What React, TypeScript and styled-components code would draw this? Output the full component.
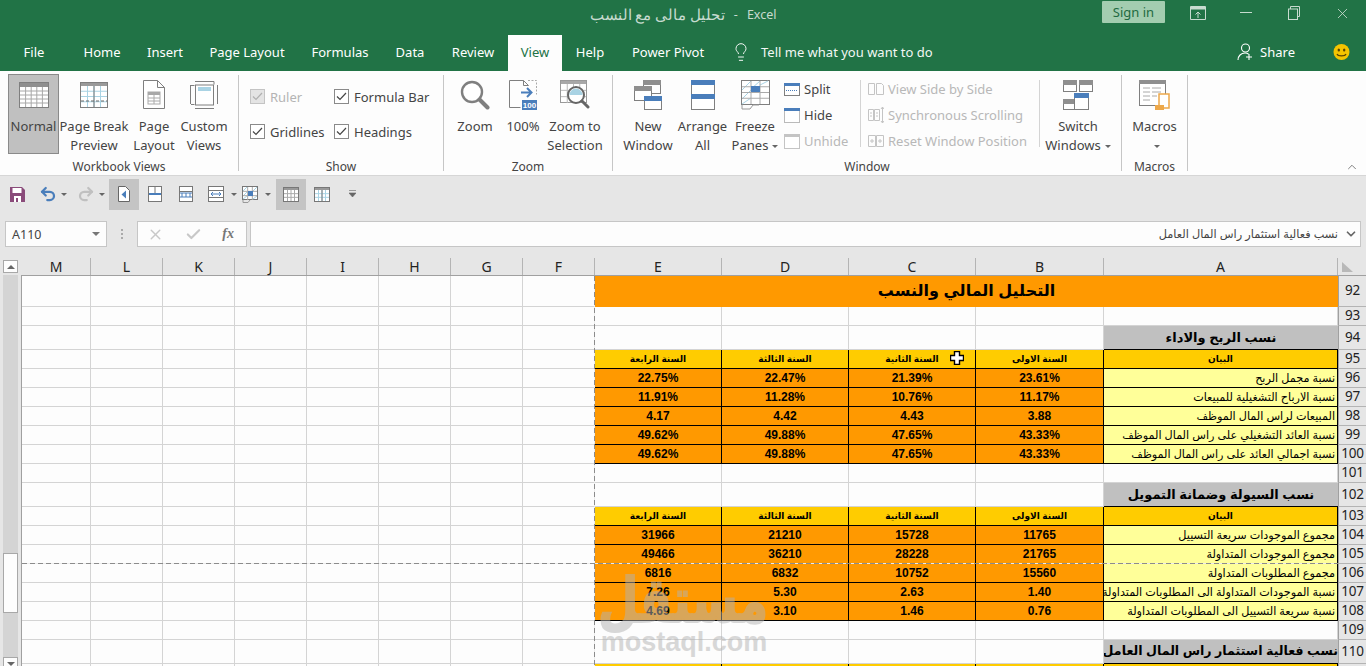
import React from 'react'
import styled, { createGlobalStyle } from 'styled-components'
import { Lightbulb, Undo2, Redo2, X, Check, ChevronDown, ChevronUp } from 'lucide-react'

const UI_FONT = `"Noto Sans", "Open Sans", sans-serif`
const SHEET_FONT = `"Liberation Sans", "DejaVu Sans", sans-serif`
const GREEN = '#217346'
const LINE = '#7f7f7f'
const BLUE = '#4a7ebb'
const OFF = '#c4c4c4'

const GlobalStyle = createGlobalStyle`
  html, body { margin: 0; padding: 0; height: 666px; overflow: hidden; background: #e6e6e6; }
  * { box-sizing: border-box; }
  body { font-family: ${UI_FONT}; }
`

const Window = styled.div`
  width: 1366px;
  height: 666px;
  overflow: hidden;
  display: flex;
  flex-direction: column;
  background: #e6e6e6;
`

const TitleBar = styled.div`
  height: 35px;
  flex: none;
  background: ${GREEN};
  display: grid;
  grid-template-columns: 1fr auto 1fr;
  color: #c7dbcf;
`

const TitleText = styled.div`
  display: flex;
  gap: 9px;
  font-size: 12.5px;
  line-height: 29px;
  white-space: nowrap;
`

const TitleName = styled.span`
  font-size: 14.5px;
  direction: rtl;
`

const TitleRight = styled.div`
  display: flex;
  justify-content: flex-end;
  align-items: flex-start;
`

const SignIn = styled.div`
  width: 63px;
  height: 22px;
  margin: 1px 9px 0 0;
  background: #a3cdb0;
  border-radius: 1px;
  color: #1e6a41;
  font-size: 13px;
  line-height: 22px;
  text-align: center;
`

const WinButton = styled.div`
  width: 48px;
  height: 26px;
  display: flex;
  align-items: center;
  justify-content: center;
`

const TabBar = styled.div`
  height: 36px;
  flex: none;
  background: ${GREEN};
  display: flex;
  padding-left: 11px;
  color: #fff;
  font-size: 13px;
`

const Tab = styled.div<{ $w: number; $active?: boolean; $gap?: number }>`
  width: ${(p) => p.$w}px;
  flex: none;
  margin-left: ${(p) => p.$gap || 0}px;
  line-height: 34px;
  text-align: center;
  white-space: nowrap;
  background: ${(p) => (p.$active ? '#fdfdfd' : 'transparent')};
  color: ${(p) => (p.$active ? GREEN : '#fff')};
`

const TellMe = styled.div`
  display: flex;
  align-items: center;
  height: 34px;
  margin-left: 13px;
  gap: 10px;
  color: #f2f7f4;
`

const TabRight = styled.div`
  margin-left: auto;
  display: flex;
  align-items: center;
  height: 34px;
  padding-right: 16px;
`

const ShareLabel = styled.span`
  margin: 0 38px 0 7px;
`

const Ribbon = styled.div`
  height: 105px;
  flex: none;
  background: #fdfdfd;
  border-bottom: 1px solid #d6d6d6;
  padding-top: 4px;
  display: flex;
  align-items: flex-start;
  position: relative;
`

const RibbonGroup = styled.div<{ $w: number }>`
  width: ${(p) => p.$w}px;
  height: 96px;
  flex: none;
  border-right: 1px solid #c6c6c6;
  display: flex;
  flex-direction: column;
`

const GroupBody = styled.div<{ $pl?: number }>`
  display: flex;
  flex: none;
  height: 80px;
  margin-top: -1px;
  padding-left: ${(p) => p.$pl || 0}px;
`

const GroupLabel = styled.div`
  flex: none;
  margin-top: 4px;
  font-size: 12px;
  line-height: 18px;
  text-align: center;
  color: #444;
  white-space: nowrap;
`

const LargeButton = styled.div<{ $w: number; $active?: boolean }>`
  width: ${(p) => p.$w}px;
  height: 80px;
  flex: none;
  padding-top: 5px;
  border: 1px solid ${(p) => (p.$active ? '#8a8a8a' : 'transparent')};
  background: ${(p) => (p.$active ? '#c0c0c0' : 'transparent')};
  display: flex;
  flex-direction: column;
  align-items: center;
`

const IconSlot = styled.div`
  height: 29px;
  flex: none;
  display: flex;
  align-items: center;
  justify-content: center;
`

const ButtonLabel = styled.div`
  flex: none;
  margin-top: 8px;
  font-size: 13px;
  line-height: 19px;
  color: #444;
  text-align: center;
  white-space: nowrap;
`

const Caret = styled.span`
  display: inline-block;
  width: 0;
  height: 0;
  margin-left: 4px;
  vertical-align: middle;
  border-left: 3px solid transparent;
  border-right: 3px solid transparent;
  border-top: 3px solid #666;
`

const CheckGrid = styled.div`
  display: grid;
  grid-template-columns: 84px auto;
  grid-auto-rows: 35px;
  padding: 5px 0 0 11px;
`

const CheckItem = styled.div<{ $off?: boolean }>`
  display: flex;
  align-items: center;
  gap: 5px;
  height: 35px;
  font-size: 13px;
  color: ${(p) => (p.$off ? '#b4b4b4' : '#444')};
  white-space: nowrap;
`

const CheckBoxMark = styled.span<{ $off?: boolean }>`
  width: 15px;
  height: 15px;
  flex: none;
  display: flex;
  align-items: center;
  justify-content: center;
  background: ${(p) => (p.$off ? '#e4e4e4' : '#fff')};
  border: 1px solid ${(p) => (p.$off ? '#c4c4c4' : '#8a8a8a')};
`

const SmallColumn = styled.div<{ $w: number; $ml: number }>`
  width: ${(p) => p.$w}px;
  flex: none;
  margin: 2px 0 0 ${(p) => p.$ml}px;
`

const SmallDivider = styled.div`
  width: 1px;
  height: 67px;
  flex: none;
  margin-top: 6px;
  background: #d4d4d4;
`

const SmallItem = styled.div<{ $off?: boolean }>`
  height: 26px;
  display: flex;
  align-items: center;
  gap: 4px;
  font-size: 13px;
  white-space: nowrap;
  color: ${(p) => (p.$off ? '#b8b8b8' : '#444')};
`

const CollapseButton = styled.div`
  position: absolute;
  right: 7px;
  bottom: 1px;
  color: #666;
  line-height: 0;
`

const QatBar = styled.div`
  height: 36px;
  flex: none;
  display: flex;
  align-items: center;
  padding-left: 2px;
`

const QatButton = styled.div<{ $w: number; $ml?: number; $active?: boolean; $color?: string }>`
  width: ${(p) => p.$w}px;
  height: 31px;
  margin-left: ${(p) => p.$ml || 0}px;
  flex: none;
  display: flex;
  align-items: center;
  justify-content: center;
  color: ${(p) => p.$color || '#666'};
  background: ${(p) => (p.$active ? '#c4c4c4' : 'transparent')};
`

const FormulaRow = styled.div`
  height: 46px;
  flex: none;
  padding: 9px 5px 11px;
  display: flex;
`

const NameBox = styled.div`
  width: 102px;
  background: #fdfdfd;
  border: 1px solid #c6c6c6;
  padding: 0 6px;
  display: flex;
  align-items: center;
  justify-content: space-between;
  font-size: 12.5px;
  color: #444;
`

const BoxCaret = styled.span`
  width: 0;
  height: 0;
  border-left: 4px solid transparent;
  border-right: 4px solid transparent;
  border-top: 4px solid #777;
`

const Dots = styled.div`
  width: 30px;
  display: flex;
  flex-direction: column;
  align-items: center;
  justify-content: center;
  gap: 2px;
  & > i {
    width: 2px;
    height: 2px;
    background: #aaa;
  }
`

const FxBox = styled.div`
  width: 110px;
  background: #fdfdfd;
  border: 1px solid #c6c6c6;
  display: flex;
  align-items: center;
  justify-content: space-between;
  padding: 0 12px 0 9px;
`

const FxText = styled.span`
  font-family: "Liberation Serif", serif;
  font-style: italic;
  font-weight: bold;
  font-size: 14px;
  color: #777;
`

const FormulaInput = styled.div`
  width: 1111px;
  margin-left: 3px;
  background: #fdfdfd;
  border: 1px solid #c6c6c6;
  display: flex;
  align-items: center;
  gap: 6px;
  padding: 0 2px 0 8px;
  direction: rtl;
`

const FormulaText = styled.span`
  font-family: ${SHEET_FONT};
  font-size: 11.3px;
  color: #444;
`

const SheetArea = styled.div`
  flex: 1;
  min-height: 0;
  display: flex;
  position: relative;
`

const ScrollBar = styled.div`
  width: 22px;
  flex: none;
  height: 420px;
  background: linear-gradient(#e6e6e6 17px, transparent 17px),
    linear-gradient(90deg, #e6e6e6 3px, #d4d4d4 3px, #d4d4d4 18px, #e6e6e6 18px, #e6e6e6 21px, #a0a0a0 21px);
  padding: 2px 0 0 3px;
`

const ScrollButton = styled.div`
  width: 15px;
  height: 13px;
  background: #fdfdfd;
  border: 1px solid #a8a8a8;
  display: flex;
  align-items: center;
  justify-content: center;
`

const ScrollThumb = styled.div`
  width: 15px;
  height: 60px;
  margin: 280px 0 44px;
  background: #fdfdfd;
  border: 1px solid #a8a8a8;
`

const ArrowUp = styled.span`
  border-left: 4px solid transparent;
  border-right: 4px solid transparent;
  border-bottom: 4px solid #666;
`

const ArrowDown = styled.span`
  border-left: 4px solid transparent;
  border-right: 4px solid transparent;
  border-top: 4px solid #666;
`

const Sheet = styled.div`
  width: 1344px;
  flex: none;
  position: relative;
  overflow: hidden;
`

const COLUMNS = '69px repeat(7, 72px) 127px 127px 127px 128px 234px 28px'

const HeaderRow = styled.div`
  display: grid;
  grid-template-columns: ${COLUMNS};
  height: 18px;
  border-bottom: 1px solid #a0a0a0;
`

const ColHead = styled.div`
  border-right: 1px solid #b4b4b4;
  font-size: 14px;
  line-height: 17px;
  text-align: center;
  color: #222;
`

const Corner = styled.div`
  padding: 4px 0 0 4px;
  line-height: 0;
`

const Row = styled.div<{ $h: number }>`
  display: grid;
  grid-template-columns: ${COLUMNS};
  height: ${(p) => p.$h}px;
  font-family: ${SHEET_FONT};
`

const Cell = styled.div`
  border-right: 1px solid #d4d4d4;
  border-bottom: 1px solid #d4d4d4;
  background: #fdfdfd;
`

const TitleCell = styled.div`
  grid-column: span 5;
  background: #ff9900;
  direction: rtl;
  text-align: center;
  font-size: 16px;
  font-weight: bold;
  line-height: 30px;
  color: #000;
`

const SectionCell = styled.div<{ $size: number }>`
  background: #c0c0c0;
  border-bottom: 1px solid #000;
  direction: rtl;
  text-align: center;
  font-size: ${(p) => p.$size}px;
  font-weight: bold;
  line-height: 23px;
  color: #000;
  white-space: nowrap;
  overflow: hidden;
`

const TableCell = styled.div<{ $bg: string; $size?: number; $weight?: string }>`
  background: ${(p) => p.$bg};
  border-right: 1px solid #000;
  border-bottom: 1px solid #000;
  font-size: ${(p) => p.$size || 12}px;
  font-weight: ${(p) => p.$weight || 'bold'};
  line-height: 18px;
  text-align: center;
  color: #000;
  white-space: nowrap;
  overflow: hidden;
  direction: rtl;
`

const LabelCell = styled(TableCell)`
  text-align: right;
  padding-right: 2px;
`

const RowHead = styled.div`
  background: #e6e6e6;
  border-left: 1px solid #a0a0a0;
  border-bottom: 1px solid #b4b4b4;
  font-family: ${UI_FONT};
  font-size: 13.5px;
  line-height: 1;
  color: #222;
  display: flex;
  align-items: center;
  justify-content: center;
  letter-spacing: -0.3px;
`

const PageBreakV = styled.div`
  position: absolute;
  left: 572px;
  top: 18px;
  bottom: 0;
  width: 1px;
  background: repeating-linear-gradient(180deg, #8c8c8c 0 5px, #ececec 5px 8px);
`

const PageBreakH = styled.div`
  position: absolute;
  left: 0;
  width: 1316px;
  top: 305px;
  height: 1px;
  background: repeating-linear-gradient(90deg, #8c8c8c 0 5px, #ececec 5px 8px);
`

const CellCursor = styled.svg`
  position: absolute;
  left: 928px;
  top: 93px;
`

const Watermark = styled.div`
  position: absolute;
  left: 578px;
  top: 308px;
  width: 168px;
  text-align: center;
  color: #b3b3b3;
  opacity: 0.5;
  font-family: ${SHEET_FONT};
  font-weight: bold;
  pointer-events: none;
`

const WatermarkWord = styled.div`
  font-size: 62px;
  line-height: 62px;
  direction: rtl;
  white-space: nowrap;
  -webkit-text-stroke: 2px #b3b3b3;
  transform: translateY(4px) scaleX(0.75);
  transform-origin: right center;
`

const WatermarkSite = styled.div`
  font-size: 27px;
  line-height: 28px;
`

/* ---------- drawings ---------- */

const GridLines = ({ x, y, w, h, cols, rows, color }: { x: number; y: number; w: number; h: number; cols: number; rows: number; color: string }) => (
  <g stroke={color} strokeWidth="1">
    {Array.from({ length: cols - 1 }, (_, i) => (
      <line key={`c${i}`} x1={x + ((i + 1) * w) / cols} x2={x + ((i + 1) * w) / cols} y1={y} y2={y + h} />
    ))}
    {Array.from({ length: rows - 1 }, (_, i) => (
      <line key={`r${i}`} x1={x} x2={x + w} y1={y + ((i + 1) * h) / rows} y2={y + ((i + 1) * h) / rows} />
    ))}
  </g>
)

const NormalIcon = () => (
  <svg width="30" height="26" viewBox="0 0 30 26">
    <rect x="0.5" y="0.5" width="29" height="25" fill="#fff" stroke={LINE} />
    <rect x="1" y="1" width="28" height="4" fill="#8f8f8f" />
    <GridLines x={1} y={5} w={28} h={20} cols={5} rows={5} color="#a8a8a8" />
  </svg>
)

const PageBreakIcon = () => (
  <svg width="28" height="26" viewBox="0 0 28 26">
    <rect x="0.5" y="0.5" width="27" height="25" fill="#fff" stroke={LINE} />
    <rect x="1" y="1" width="26" height="3" fill="#9a9a9a" />
    <GridLines x={1} y={4} w={26} h={21} cols={4} rows={4} color="#a9d3e4" />
    <line x1="14" x2="14" y1="4" y2="25" stroke="#777" />
    <line x1="1" x2="27" y1="19" y2="19" stroke="#666" strokeDasharray="3 2" />
  </svg>
)

const PageLayoutIcon = () => (
  <svg width="22" height="29" viewBox="0 0 22 29">
    <path d="M.5.5h14l7 7v21H.5z M14.5.5v7h7" fill="#fff" stroke={LINE} />
    <rect x="5" y="12" width="12" height="12" fill="#fff" stroke="#aaa" />
    <rect x="5" y="12" width="12" height="3" fill="#a8a8a8" />
    <GridLines x={5} y={15} w={12} h={9} cols={2} rows={3} color="#aaa" />
  </svg>
)

const CustomViewsIcon = () => (
  <svg width="28" height="29" viewBox="0 0 28 29">
    <path d="M4.500 5.500H1M.5 5v19M1 24.500h3.500M5 1.500h19v3M27.500 5v19M24 28.500H5" fill="none" stroke={LINE} />
    <rect x="5.500" y="5" width="18" height="20" fill="#fff" stroke={LINE} />
    <rect x="8" y="7" width="13" height="4" fill="#a9d3e4" />
  </svg>
)

const ZoomIcon = () => (
  <svg width="30" height="30" viewBox="0 0 30 30">
    <circle cx="12" cy="12" r="10" fill="#fff" stroke={LINE} strokeWidth="2.4" />
    <line x1="19.5" y1="19.5" x2="27.5" y2="27.5" stroke={LINE} strokeWidth="4" strokeLinecap="round" />
  </svg>
)

const HundredIcon = () => (
  <svg width="28" height="30" viewBox="0 0 28 30">
    <path d="M.5 27.500V.5h14l5 5" fill="none" stroke={LINE} />
    <path d="M.5 27.500h11M14.500.5v5h5" fill="none" stroke={LINE} />
    <path d="M19 .5h8.500v14" fill="none" stroke="#aaa" strokeDasharray="2 1.500" />
    <path d="M12 12.500h10M18 8l4.500 4.500L18 17" fill="none" stroke={BLUE} strokeWidth="2" />
    <rect x="13" y="20" width="15" height="10" fill={BLUE} />
    <text x="20.5" y="28" textAnchor="middle" fontSize="8" fontWeight="bold" fontFamily={SHEET_FONT} fill="#fff">100</text>
  </svg>
)

const ZoomSelectionIcon = () => (
  <svg width="30" height="30" viewBox="0 0 30 30">
    <rect x="0.5" y="0.5" width="26" height="22" fill="#fff" stroke="#999" />
    <rect x="1" y="1" width="25" height="3" fill="#a8a8a8" />
    <GridLines x={1} y={4} w={25} h={19} cols={4} rows={3} color="#bbb" />
    <circle cx="16" cy="15" r="8" fill="#fff" stroke="#666" strokeWidth="2" />
    <path d="M9.500 15a6.500 6.500 0 0 1 13 0z" fill="#a9d3e4" />
    <line x1="22" y1="21" x2="28" y2="27" stroke="#666" strokeWidth="3" strokeLinecap="round" />
  </svg>
)

const MiniWindow = ({ x, y, w, h, bar }: { x: number; y: number; w: number; h: number; bar: string }) => (
  <g>
    <rect x={x + 0.5} y={y + 0.5} width={w} height={h} fill="#fff" stroke={LINE} />
    <rect x={x} y={y} width={w + 1} height="5" fill={bar} />
  </g>
)

const NewWindowIcon = () => (
  <svg width="28" height="30" viewBox="0 0 28 30">
    <MiniWindow x={9} y={0} w={17} h={13} bar="#8f8f8f" />
    <MiniWindow x={0} y={6} w={17} h={14} bar="#8f8f8f" />
    <MiniWindow x={10} y={16} w={17} h={13} bar={BLUE} />
  </svg>
)

const ArrangeAllIcon = () => (
  <svg width="24" height="30" viewBox="0 0 24 30">
    <MiniWindow x={0} y={0} w={23} h={14} bar={BLUE} />
    <MiniWindow x={0} y={14} w={23} h={15} bar={BLUE} />
  </svg>
)

const FreezeIcon = () => (
  <svg width="29" height="30" viewBox="0 0 29 30">
    <rect x="0.5" y="0.5" width="28" height="24" fill="#fff" stroke={LINE} />
    <path d="M1 10L10 1M10 9L19 1M1 19l9-9M1 24l9-6M19 5l8-4" stroke="#a9d3e4" fill="none" />
    <GridLines x={1} y={1} w={27} h={23} cols={3} rows={4} color="#aaa" />
    <rect x="10" y="6" width="9" height="6" fill={BLUE} />
    <path d="M1 25v4h8l3-4h6" fill="none" stroke="#999" />
  </svg>
)

const SplitIcon = () => (
  <svg width="16" height="13" viewBox="0 0 16 13">
    <rect x="0.5" y="0.5" width="15" height="12" fill="#fff" stroke={LINE} />
    <rect x="0" y="0" width="16" height="3" fill={BLUE} />
    <line x1="2" x2="14" y1="7.500" y2="7.500" stroke={BLUE} strokeDasharray="1 1" />
  </svg>
)

const HideIcon = () => (
  <svg width="16" height="15" viewBox="0 0 16 15">
    <rect x="0.5" y="1.500" width="15" height="13" fill="#fff" stroke="#777" strokeDasharray="1 1" />
    <rect x="0" y="0" width="16" height="3" fill={BLUE} />
  </svg>
)

const UnhideIcon = () => (
  <svg width="16" height="15" viewBox="0 0 16 15">
    <rect x="0.5" y="1.500" width="15" height="13" fill="#fff" stroke={OFF} />
    <rect x="0" y="0" width="16" height="3" fill={OFF} />
  </svg>
)

const SideBySideIcon = () => (
  <svg width="16" height="14" viewBox="0 0 16 14">
    <path d="M.5 1.500h6v11h-6zM8.500 1.500h5l2 2v9h-7z" fill="none" stroke={OFF} />
  </svg>
)

const SyncIcon = () => (
  <svg width="16" height="18" viewBox="0 0 16 18">
    <path d="M.5 3.500h5v11h-5zM6.500 3.500h5v11h-5z" fill="none" stroke={OFF} />
    <path d="M2 7h2M2 10h2M8 7h2M8 10h2M14.500 1v16M13 3l1.500-2L16 3M13 15l1.500 2 1.500-2" fill="none" stroke={OFF} />
  </svg>
)

const ResetIcon = () => (
  <svg width="16" height="14" viewBox="0 0 16 14">
    <path d="M.5 1.500h7v11h-7zM8.500 1.500h7v11h-7z" fill="none" stroke={OFF} />
    <path d="M2 7h4M4 5v4M10 7h4M12 5v4" stroke={OFF} />
  </svg>
)

const SwitchIcon = () => (
  <svg width="30" height="30" viewBox="0 0 30 30">
    <MiniWindow x={0} y={0} w={13} h={11} bar="#8f8f8f" />
    <MiniWindow x={16} y={0} w={13} h={11} bar="#8f8f8f" />
    <MiniWindow x={0} y={19} w={11} h={10} bar="#8f8f8f" />
    <MiniWindow x={11} y={13} w={14} h={16} bar={BLUE} />
  </svg>
)

const MacrosIcon = () => (
  <svg width="32" height="30" viewBox="0 0 32 30">
    <rect x="0.5" y="0.5" width="26" height="25" fill="#fff" stroke={LINE} />
    <rect x="0" y="0" width="27" height="4" fill="#8f8f8f" />
    <path d="M4 8h7M13 8h9M4 12h7M13 12h9M4 16h7M13 16h5M4 20h7" stroke="#aaa" />
    <path d="M20 14h10v14H20z" fill="#fff" stroke="#eda84a" strokeWidth="1.500" />
    <rect x="16" y="25" width="9" height="5" fill="#eda84a" />
  </svg>
)

const Tick = ({ color }: { color: string }) => (
  <svg width="11" height="9" viewBox="0 0 11 9">
    <path d="M1 4.500l3 3L10 1" fill="none" stroke={color} strokeWidth="1.200" />
  </svg>
)

const ShareIcon = () => (
  <svg width="16" height="18" viewBox="0 0 16 18">
    <circle cx="8.500" cy="5" r="4" fill="none" stroke="#fff" strokeWidth="1.100" />
    <path d="M1 17c0-4 3-7 7-7 1.500 0 2.500.3 3.500 1M12 11v6M9 14h6" fill="none" stroke="#fff" strokeWidth="1.100" />
  </svg>
)

const SmileIcon = () => (
  <svg width="17" height="18" viewBox="0 0 17 18">
    <circle cx="8.500" cy="9" r="8" fill="#f5c400" />
    <ellipse cx="5.800" cy="7" rx="1.200" ry="1.600" fill="#5a4200" />
    <ellipse cx="11.200" cy="7" rx="1.200" ry="1.600" fill="#5a4200" />
    <path d="M4 11c1 2.500 8 2.500 9 0" fill="none" stroke="#5a4200" strokeWidth="1.200" />
  </svg>
)

const RibbonDisplayIcon = () => (
  <svg width="16" height="14" viewBox="0 0 16 14">
    <path d="M.5.500h15v13H.500zM.5 3h15" fill="none" stroke="#c7dbcf" />
    <rect x="1" y="1" width="14" height="2" fill="#c7dbcf" />
    <path d="M8 12V6M5.500 8.500L8 6l2.500 2.500" fill="none" stroke="#c7dbcf" />
  </svg>
)

const RestoreIcon = () => (
  <svg width="12" height="14" viewBox="0 0 12 14">
    <path d="M2.500 3V.5h9v10H9" fill="none" stroke="#c7dbcf" />
    <rect x="0.5" y="3" width="9" height="10.500" fill="none" stroke="#c7dbcf" />
  </svg>
)

const SaveIcon = () => (
  <svg width="15" height="15" viewBox="0 0 15 15">
    <path d="M0 0h12l3 3v12H0z" fill="#8a4b7a" />
    <rect x="2.500" y="1" width="9" height="5" fill="#fff" />
    <rect x="4" y="9" width="7" height="6" fill="#fff" />
    <rect x="6" y="11" width="2" height="4" fill="#8a4b7a" />
  </svg>
)

const QatPage = () => (
  <svg width="12" height="16" viewBox="0 0 12 16">
    <path d="M.5.500h7l4 4v11H.500z" fill="#fff" stroke="#666" />
    <path d="M8 4.500L3.500 8.500 8 12.500z" fill={BLUE} />
  </svg>
)

const QatSplitH = () => (
  <svg width="14" height="16" viewBox="0 0 14 16">
    <rect x="0.5" y="0.5" width="13" height="15" fill="#fff" stroke="#777" />
    <line x1="7" x2="7" y1="1" y2="8" stroke="#777" />
    <line x1="1" x2="13" y1="8" y2="8" stroke={BLUE} strokeWidth="2" />
  </svg>
)

const QatSplitV = () => (
  <svg width="14" height="16" viewBox="0 0 14 16">
    <rect x="0.5" y="0.5" width="13" height="15" fill="#fff" stroke="#777" />
    <line x1="1" x2="13" y1="5.500" y2="5.500" stroke="#777" />
    <path d="M3 7v4M7 7v4M11 7v4M1 7h12M1 11h12" stroke={BLUE} fill="none" />
  </svg>
)

const QatFit = () => (
  <svg width="16" height="16" viewBox="0 0 16 16">
    <rect x="0.5" y="0.5" width="15" height="15" fill="#fff" stroke="#777" />
    <path d="M1 4.500h14M1 11.500h14" stroke="#777" />
    <path d="M3 8h10M5 6L3 8l2 2M11 6l2 2-2 2" fill="none" stroke={BLUE} />
  </svg>
)

const QatFreeze = () => (
  <svg width="16" height="17" viewBox="0 0 16 17">
    <rect x="0.5" y="0.5" width="15" height="13" fill="#fff" stroke="#777" />
    <path d="M1 5l4-4M1 10l4-4M11 5l4-4M1 13l4-3M11 13l4-3" stroke="#a9d3e4" />
    <GridLines x={1} y={1} w={14} h={13} cols={3} rows={3} color="#aaa" />
    <rect x="6" y="5" width="5" height="5" fill={BLUE} />
    <path d="M1 14v2.500h5l2-2.500" fill="none" stroke="#999" />
  </svg>
)

const QatGrid = ({ blue }: { blue?: boolean }) => (
  <svg width="16" height="15" viewBox="0 0 16 15">
    <rect x="0.5" y="0.5" width="15" height="14" fill="#fff" stroke="#777" />
    <rect x="1" y="1" width="14" height="2" fill="#999" />
    <GridLines x={1} y={3} w={14} h={11} cols={4} rows={3} color={blue ? '#a9d3e4' : '#aaa'} />
    {blue && <line x1="8" x2="8" y1="3" y2="14" stroke="#777" />}
  </svg>
)

const QatCustomize = () => (
  <svg width="7" height="8" viewBox="0 0 7 8">
    <path d="M0 .5h7M0 3h7L3.500 7z" fill="#666" stroke="#666" strokeWidth=".6" />
  </svg>
)

const QatCaret = styled(Caret)`
  margin-left: 0;
`

const PlusCursor = () => (
  <CellCursor width="14" height="14" viewBox="0 0 14 14">
    <path d="M4.500.5h5v4h4v5h-4v4h-5v-4h-4v-5h4z" fill="#fff" stroke="#000" strokeWidth="1.400" />
  </CellCursor>
)

/* ---------- sheet data ---------- */

type SheetRow = {
  n: number
  h: number
  kind?: 'title' | 'section' | 'head' | 'data' | 'band'
  text?: string
  size?: number
  values?: string[]
}

const YEARS = ['السنة الرابعة', 'السنة الثالثة', 'السنة الثانية', 'السنة الاولى']

const ROWS: SheetRow[] = [
  { n: 92, h: 31, kind: 'title', text: 'التحليل المالي والنسب' },
  { n: 93, h: 19 },
  { n: 94, h: 24, kind: 'section', text: 'نسب الربح والاداء' },
  { n: 95, h: 19, kind: 'head' },
  { n: 96, h: 19, kind: 'data', text: 'نسبة مجمل الربح', values: ['22.75%', '22.47%', '21.39%', '23.61%'] },
  { n: 97, h: 19, kind: 'data', text: 'نسبة الارباح التشغيلية للمبيعات', values: ['11.91%', '11.28%', '10.76%', '11.17%'] },
  { n: 98, h: 19, kind: 'data', text: 'المبيعات لراس المال الموظف', values: ['4.17', '4.42', '4.43', '3.88'] },
  { n: 99, h: 19, kind: 'data', text: 'نسبة العائد التشغيلي على راس المال الموظف', values: ['49.62%', '49.88%', '47.65%', '43.33%'] },
  { n: 100, h: 19, kind: 'data', text: 'نسبة اجمالي العائد على راس المال الموظف', values: ['49.62%', '49.88%', '47.65%', '43.33%'] },
  { n: 101, h: 19 },
  { n: 102, h: 24, kind: 'section', text: 'نسب السيولة وضمانة التمويل' },
  { n: 103, h: 19, kind: 'head' },
  { n: 104, h: 19, kind: 'data', text: 'مجموع الموجودات سريعة التسييل', values: ['31966', '21210', '15728', '11765'] },
  { n: 105, h: 19, kind: 'data', text: 'مجموع الموجودات المتداولة', values: ['49466', '36210', '28228', '21765'] },
  { n: 106, h: 19, kind: 'data', text: 'مجموع المطلوبات المتداولة', values: ['6816', '6832', '10752', '15560'] },
  { n: 107, h: 19, kind: 'data', text: 'نسبة الموجودات المتداولة الى المطلوبات المتداولة', values: ['7.26', '5.30', '2.63', '1.40'] },
  { n: 108, h: 19, kind: 'data', text: 'نسبة سريعة التسييل الى المطلوبات المتداولة', values: ['4.69', '3.10', '1.46', '0.76'] },
  { n: 109, h: 19 },
  { n: 110, h: 24, kind: 'section', size: 12.6, text: 'نسب فعالية استثمار راس المال العامل' },
  { n: 111, h: 19, kind: 'band' },
]

const LEFT_COLS = ['M', 'L', 'K', 'J', 'I', 'H', 'G', 'F']
const RIGHT_COLS = ['E', 'D', 'C', 'B', 'A']

const blanks = (count: number, prefix: string) =>
  Array.from({ length: count }, (_, i) => <Cell key={`${prefix}${i}`} />)

const RowCells = ({ row }: { row: SheetRow }) => {
  if (row.kind === 'title') return <TitleCell>{row.text}</TitleCell>
  if (row.kind === 'section') {
    return (
      <>
        {blanks(4, 'b')}
        <SectionCell $size={row.size || 13}>{row.text}</SectionCell>
      </>
    )
  }
  if (row.kind === 'band') {
    return <>{[0, 1, 2, 3, 4].map((i) => <TableCell key={i} $bg="#ffcc00" />)}</>
  }
  if (row.kind === 'head') {
    return (
      <>
        {YEARS.map((year) => (
          <TableCell key={year} $bg="#ffcc00" $size={9}>{year}</TableCell>
        ))}
        <TableCell $bg="#ffcc00" $size={9}>البيان</TableCell>
      </>
    )
  }
  if (row.kind === 'data') {
    return (
      <>
        {row.values!.map((v, i) => (
          <TableCell key={i} $bg="#ff9900"><bdi dir="ltr">{v}</bdi></TableCell>
        ))}
        <LabelCell $bg="#ffff99" $size={11.2} $weight="normal">{row.text}</LabelCell>
      </>
    )
  }
  return <>{blanks(5, 'b')}</>
}

const App = () => (
  <Window>
    <GlobalStyle />
    <TitleBar>
      <div />
      <TitleText>
        <TitleName>تحليل مالى مع النسب</TitleName>
        <span>-</span>
        <span>Excel</span>
      </TitleText>
      <TitleRight>
        <SignIn>Sign in</SignIn>
        <WinButton><RibbonDisplayIcon /></WinButton>
        <WinButton><svg width="12" height="2"><rect width="12" height="1" fill="#c7dbcf" /></svg></WinButton>
        <WinButton><RestoreIcon /></WinButton>
        <WinButton><X size={17} color="#c7dbcf" strokeWidth={1.2} /></WinButton>
      </TitleRight>
    </TitleBar>

    <TabBar>
      <Tab $w={46}>File</Tab>
      <Tab $w={64} $gap={13}>Home</Tab>
      <Tab $w={62}>Insert</Tab>
      <Tab $w={102}>Page Layout</Tab>
      <Tab $w={84}>Formulas</Tab>
      <Tab $w={56}>Data</Tab>
      <Tab $w={70}>Review</Tab>
      <Tab $w={54} $active>View</Tab>
      <Tab $w={56}>Help</Tab>
      <Tab $w={100}>Power Pivot</Tab>
      <TellMe>
        <Lightbulb size={20} color="#f2f7f4" strokeWidth={1.2} />
        Tell me what you want to do
      </TellMe>
      <TabRight>
        <ShareIcon />
        <ShareLabel>Share</ShareLabel>
        <SmileIcon />
      </TabRight>
    </TabBar>

    <Ribbon>
      <RibbonGroup $w={239}>
        <GroupBody $pl={8}>
          <LargeButton $w={51} $active>
            <IconSlot><NormalIcon /></IconSlot>
            <ButtonLabel>Normal</ButtonLabel>
          </LargeButton>
          <LargeButton $w={70}>
            <IconSlot><PageBreakIcon /></IconSlot>
            <ButtonLabel>Page Break<br />Preview</ButtonLabel>
          </LargeButton>
          <LargeButton $w={50}>
            <IconSlot><PageLayoutIcon /></IconSlot>
            <ButtonLabel>Page<br />Layout</ButtonLabel>
          </LargeButton>
          <LargeButton $w={50}>
            <IconSlot><CustomViewsIcon /></IconSlot>
            <ButtonLabel>Custom<br />Views</ButtonLabel>
          </LargeButton>
        </GroupBody>
        <GroupLabel>Workbook Views</GroupLabel>
      </RibbonGroup>

      <RibbonGroup $w={205}>
        <GroupBody>
          <CheckGrid>
            <CheckItem $off><CheckBoxMark $off><Tick color="#b0b0b0" /></CheckBoxMark>Ruler</CheckItem>
            <CheckItem><CheckBoxMark><Tick color="#444" /></CheckBoxMark>Formula Bar</CheckItem>
            <CheckItem><CheckBoxMark><Tick color="#444" /></CheckBoxMark>Gridlines</CheckItem>
            <CheckItem><CheckBoxMark><Tick color="#444" /></CheckBoxMark>Headings</CheckItem>
          </CheckGrid>
        </GroupBody>
        <GroupLabel>Show</GroupLabel>
      </RibbonGroup>

      <RibbonGroup $w={169}>
        <GroupBody $pl={6}>
          <LargeButton $w={50}>
            <IconSlot><ZoomIcon /></IconSlot>
            <ButtonLabel>Zoom</ButtonLabel>
          </LargeButton>
          <LargeButton $w={46}>
            <IconSlot><HundredIcon /></IconSlot>
            <ButtonLabel>100%</ButtonLabel>
          </LargeButton>
          <LargeButton $w={58}>
            <IconSlot><ZoomSelectionIcon /></IconSlot>
            <ButtonLabel>Zoom to<br />Selection</ButtonLabel>
          </LargeButton>
        </GroupBody>
        <GroupLabel>Zoom</GroupLabel>
      </RibbonGroup>

      <RibbonGroup $w={509}>
        <GroupBody $pl={8}>
          <LargeButton $w={54}>
            <IconSlot><NewWindowIcon /></IconSlot>
            <ButtonLabel>New<br />Window</ButtonLabel>
          </LargeButton>
          <LargeButton $w={55}>
            <IconSlot><ArrangeAllIcon /></IconSlot>
            <ButtonLabel>Arrange<br />All</ButtonLabel>
          </LargeButton>
          <LargeButton $w={50}>
            <IconSlot><FreezeIcon /></IconSlot>
            <ButtonLabel>Freeze<br />Panes<Caret /></ButtonLabel>
          </LargeButton>
          <SmallColumn $w={76} $ml={4}>
            <SmallItem><SplitIcon />Split</SmallItem>
            <SmallItem><HideIcon />Hide</SmallItem>
            <SmallItem $off><UnhideIcon />Unhide</SmallItem>
          </SmallColumn>
          <SmallDivider />
          <SmallColumn $w={171} $ml={7}>
            <SmallItem $off><SideBySideIcon />View Side by Side</SmallItem>
            <SmallItem $off><SyncIcon />Synchronous Scrolling</SmallItem>
            <SmallItem $off><ResetIcon />Reset Window Position</SmallItem>
          </SmallColumn>
          <SmallDivider />
          <LargeButton $w={76}>
            <IconSlot><SwitchIcon /></IconSlot>
            <ButtonLabel>Switch<br />Windows<Caret /></ButtonLabel>
          </LargeButton>
        </GroupBody>
        <GroupLabel>Window</GroupLabel>
      </RibbonGroup>

      <RibbonGroup $w={66}>
        <GroupBody>
          <LargeButton $w={65}>
            <IconSlot><MacrosIcon /></IconSlot>
            <ButtonLabel>Macros<br /><Caret /></ButtonLabel>
          </LargeButton>
        </GroupBody>
        <GroupLabel>Macros</GroupLabel>
      </RibbonGroup>

      <CollapseButton><ChevronUp size={14} strokeWidth={1.4} /></CollapseButton>
    </Ribbon>

    <QatBar>
      <QatButton $w={30}><SaveIcon /></QatButton>
      <QatButton $w={24} $ml={4} $color={BLUE}><Undo2 size={18} strokeWidth={3} /></QatButton>
      <QatButton $w={8}><QatCaret /></QatButton>
      <QatButton $w={24} $ml={6} $color="#c0c0c0"><Redo2 size={18} strokeWidth={3} /></QatButton>
      <QatButton $w={8}><QatCaret /></QatButton>
      <QatButton $w={30} $ml={3} $active><QatPage /></QatButton>
      <QatButton $w={31}><QatSplitH /></QatButton>
      <QatButton $w={31}><QatSplitV /></QatButton>
      <QatButton $w={30}><QatFit /></QatButton>
      <QatButton $w={6}><QatCaret /></QatButton>
      <QatButton $w={26}><QatFreeze /></QatButton>
      <QatButton $w={10}><QatCaret /></QatButton>
      <QatButton $w={30} $ml={3} $active><QatGrid /></QatButton>
      <QatButton $w={32}><QatGrid blue /></QatButton>
      <QatButton $w={28}><QatCustomize /></QatButton>
    </QatBar>

    <FormulaRow>
      <NameBox>A110<BoxCaret /></NameBox>
      <Dots><i /><i /><i /></Dots>
      <FxBox>
        <X size={17} color="#c8c8c8" strokeWidth={2} />
        <Check size={17} color="#c8c8c8" strokeWidth={3} />
        <FxText>fx</FxText>
      </FxBox>
      <FormulaInput>
        <ChevronDown size={14} color="#666" strokeWidth={3} />
        <FormulaText>نسب فعالية استثمار راس المال العامل</FormulaText>
      </FormulaInput>
    </FormulaRow>

    <SheetArea>
      <ScrollBar>
        <ScrollButton><ArrowUp /></ScrollButton>
        <ScrollThumb />
        <ScrollButton><ArrowDown /></ScrollButton>
      </ScrollBar>
      <Sheet>
        <HeaderRow>
          {[...LEFT_COLS, ...RIGHT_COLS].map((c) => <ColHead key={c}>{c}</ColHead>)}
          <Corner>
            <svg width="11" height="10" viewBox="0 0 11 10"><path d="M0 0v10h11z" fill="#b8b8b8" /></svg>
          </Corner>
        </HeaderRow>
        {ROWS.map((row) => (
          <Row key={row.n} $h={row.h}>
            {blanks(8, 'l')}
            <RowCells row={row} />
            <RowHead>{row.kind === 'band' ? null : row.n}</RowHead>
          </Row>
        ))}
        <PageBreakV />
        <PageBreakH />
        <PlusCursor />
        <Watermark>
          <WatermarkWord>مستقل</WatermarkWord>
          <WatermarkSite>mostaql.com</WatermarkSite>
        </Watermark>
      </Sheet>
    </SheetArea>
  </Window>
)

export default App
